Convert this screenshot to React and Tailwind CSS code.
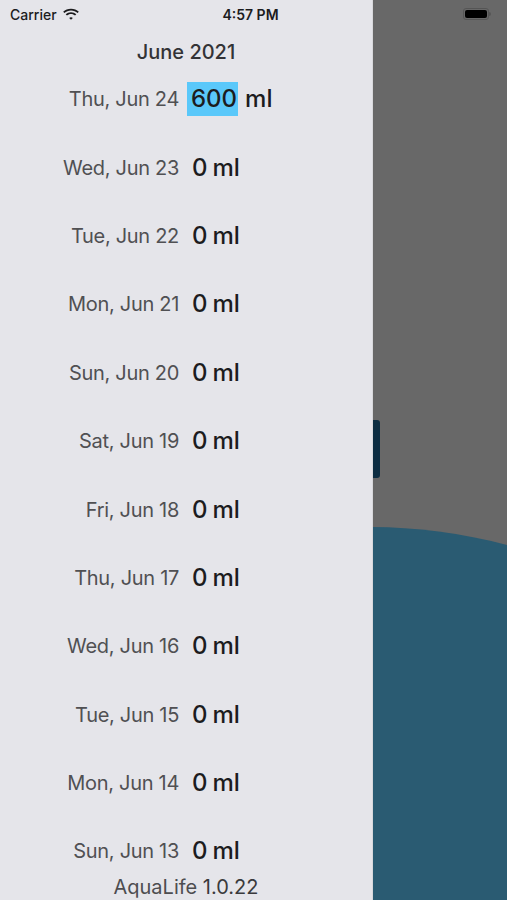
const days = [
  { label: "Thu, Jun 24", value: "600", active: true },
  { label: "Wed, Jun 23", value: "0" },
  { label: "Tue, Jun 22", value: "0" },
  { label: "Mon, Jun 21", value: "0" },
  { label: "Sun, Jun 20", value: "0" },
  { label: "Sat, Jun 19", value: "0" },
  { label: "Fri, Jun 18", value: "0" },
  { label: "Thu, Jun 17", value: "0" },
  { label: "Wed, Jun 16", value: "0" },
  { label: "Tue, Jun 15", value: "0" },
  { label: "Mon, Jun 14", value: "0" },
  { label: "Sun, Jun 13", value: "0" },
];

const font = { fontFamily: "Inter, 'Noto Sans', sans-serif" };

const Wifi = () => (
  <svg width="18" height="13" viewBox="0 0 17 12" className="ml-[5px]">
    <path d="M8.5 2.2c2.4 0 4.6.9 6.2 2.5l1.2-1.2C14 1.6 11.4.5 8.5.5S3 1.6 1.1 3.5l1.2 1.2C3.9 3.1 6.1 2.2 8.5 2.2z" fill="#1c1c1e" />
    <path d="M8.5 5.5c1.5 0 2.8.6 3.8 1.5l1.2-1.2C12.2 4.5 10.4 3.8 8.5 3.8S4.8 4.5 3.5 5.8L4.7 7c1-.9 2.3-1.5 3.8-1.5z" fill="#1c1c1e" />
    <path d="M8.5 8.6c.7 0 1.3.3 1.7.7L8.5 11 6.8 9.3c.4-.4 1-.7 1.7-.7z" fill="#1c1c1e" />
  </svg>
);

const StatusBar = () => (
  <div className="absolute inset-x-0 top-0 h-[28px] flex items-center px-[10px] text-[14px]" style={font}>
    <div className="flex items-center flex-1 font-medium text-[#1c1c1e]">
      Carrier
      <Wifi />
    </div>
    <div className="font-semibold text-[#1c1c1e]">4:57 PM</div>
    <div className="flex-1 flex justify-end pr-[6px]">
      <div className="flex items-center">
        <div className="w-[26px] h-[12px] rounded-[3px] border border-[#555] p-[1px]">
          <div className="w-full h-full rounded-[2px] bg-black" />
        </div>
        <div className="w-[2px] h-[4px] rounded-r-sm bg-[#555]" />
      </div>
    </div>
  </div>
);

const DayRow = ({ label, value, active }) => (
  <div className="h-[68.4px] flex items-center">
    <div className="w-[179px] text-right text-[20px] text-[#505053] tracking-[-0.3px]">{label}</div>
    <div className="ml-[8px] flex items-center text-[24px] font-medium text-[#1c1c1e]">
      <span className={active ? "bg-[#5ac8fa] pl-[4px] pr-[1px] h-[34px] flex items-center" : "px-[5px]"}>{value}</span>
      <span className={active ? "ml-[7px]" : ""}>ml</span>
    </div>
  </div>
);

export default function App() {
  return (
    <div className="relative w-[507px] h-[900px] flex overflow-hidden bg-[#686868]" style={font}>
      <div className="w-[373px] h-full flex flex-col bg-[#e5e5ea] border-r border-[#d8d8dc]">
        <div className="h-[65px] pt-[38px] text-center text-[20px] leading-[28px] font-medium text-[#333336]">June 2021</div>
        <div className="flex flex-col">
          {days.map((d) => (
            <DayRow key={d.label} {...d} />
          ))}
        </div>
        <div className="-mt-[10px] text-center text-[20px] leading-[22px] text-[#4d4d50]">
          AquaLife <span className="text-[#3a3a3c]">1.0.22</span>
        </div>
      </div>
      <div className="flex-1 flex flex-col">
        <div className="h-[420px]" />
        <div className="w-[7px] h-[58px] rounded-r-[3px] bg-[#0c2d42]" />
        <svg className="mt-[49px] w-full flex-1" viewBox="0 0 134 373" preserveAspectRatio="none">
          <path d="M0 0 C40 0 90 6 134 18 L134 373 L0 373 Z" fill="#2a5b72" />
        </svg>
      </div>
      <StatusBar />
    </div>
  );
}
